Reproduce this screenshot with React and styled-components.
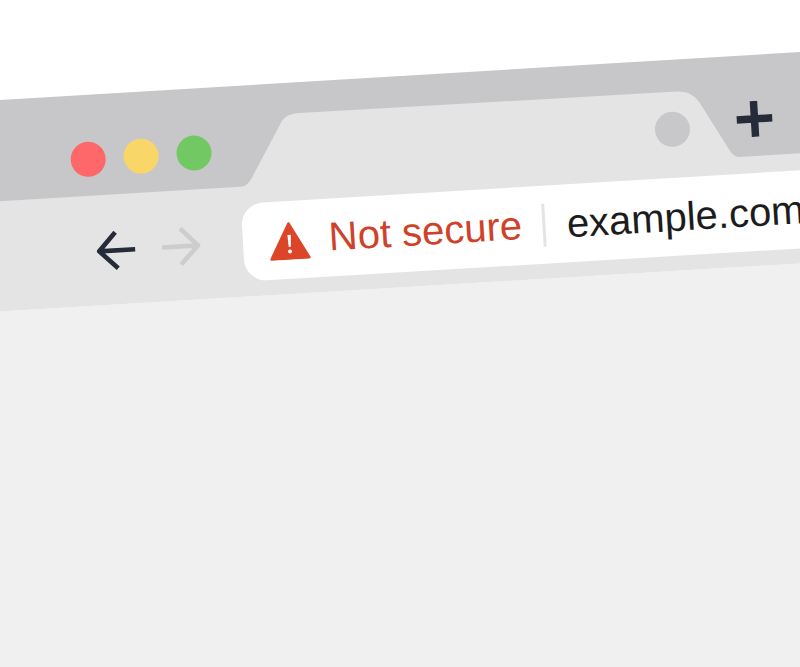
import React from "react";
import styled, { createGlobalStyle } from "styled-components";

const GlobalStyle = createGlobalStyle`
  html, body {
    margin: 0;
    padding: 0;
    background: #fff;
  }
  #root {
    width: 800px;
    height: 667px;
    overflow: hidden;
  }
`;

const Scene = styled.div`
  width: 800px;
  height: 667px;
  padding-top: 100px;
  box-sizing: border-box;
  overflow: hidden;
`;

const BrowserWindow = styled.div`
  width: 1060px;
  margin-left: -60px;
  transform-origin: 60px 0;
  transform: rotate(-3.43deg);
  font-family: "Liberation Sans", Arial, sans-serif;
`;

const TabStrip = styled.div`
  height: 102px;
  background: #c7c7ca;
  display: flex;
  padding-left: 127px;
`;

const Dots = styled.div`
  display: flex;
  gap: 18px;
  padding-top: 47px;
  width: 163px;
`;

const Dot = styled.span`
  width: 35px;
  height: 35px;
  border-radius: 50%;
  background: ${(props) => props.color};
`;

const Tab = styled.div`
  position: relative;
  width: 510px;
  height: 102px;
  display: flex;
  justify-content: flex-end;
  padding: 52px 53px 0 0;
  box-sizing: border-box;
`;

const TabShape = styled.svg`
  position: absolute;
  top: 0;
  left: 0;
`;

const TabClose = styled.span`
  position: relative;
  width: 35px;
  height: 35px;
  border-radius: 50%;
  background: #c8c8ca;
`;

const NewTab = styled.svg`
  margin: 46px 0 0 -6px;
`;

const Toolbar = styled.div`
  position: relative;
  height: 110px;
  margin-top: -1px;
  background: #e4e4e4;
  display: flex;
  padding: 17px 0 0 147px;
  box-sizing: border-box;
`;

const NavButtons = styled.div`
  display: flex;
  flex-shrink: 0;
  gap: 25px;
  padding-top: 19px;
  width: 147px;
`;

const AddressBar = styled.div`
  height: 78px;
  width: 760px;
  background: #fff;
  border-radius: 22px 0 0 22px;
  display: flex;
  align-items: center;
  padding-left: 26px;
  box-sizing: border-box;
`;

const Warning = styled.svg`
  margin: 1px 19px 0 0;
`;

const SecurityLabel = styled.span`
  font-size: 40px;
  color: #cf4229;
  line-height: 1;
  margin-bottom: 2px;
`;

const Divider = styled.span`
  width: 3px;
  height: 43px;
  margin: 0 21px 0 21px;
  background: #e4e4e4;
`;

const Url = styled.span`
  font-size: 40px;
  color: #1c1c20;
  line-height: 1;
`;

const Page = styled.div`
  height: 700px;
  background: #f0f0f0;
`;

const Arrow = ({ flip, color }) => (
  <svg
    width="40"
    height="40"
    viewBox="0 0 40 40"
    style={flip ? { transform: "scaleX(-1)" } : undefined}
  >
    <path
      d="M39 20H3M20 2 3 20l18 18"
      fill="none"
      stroke={color}
      strokeWidth="4.6"
      strokeLinejoin="round"
    />
  </svg>
);

export default function App() {
  return (
    <>
      <GlobalStyle />
      <Scene>
        <BrowserWindow>
          <TabStrip>
            <Dots>
              <Dot color="#fe686a" />
              <Dot color="#f8d668" />
              <Dot color="#72c862" />
            </Dots>
            <Tab>
              <TabShape width="510" height="102" viewBox="0 0 510 102">
                <path
                  d="M0 102C8 102 12 100 16 94L50 38C54 33 60 31 68 31L446 32C456 32 463 36 468 44L496 95C499 100 504 102 510 102Z"
                  fill="#e4e4e4"
                />
              </TabShape>
              <TabClose />
            </Tab>
            <NewTab width="36" height="36" viewBox="0 0 36 36">
              <path d="M0 18H36M18 0V36" fill="none" stroke="#252b38" strokeWidth="7.5" />
            </NewTab>
          </TabStrip>
          <Toolbar>
            <NavButtons>
              <Arrow color="#252b38" />
              <Arrow flip color="#cdcdcf" />
            </NavButtons>
            <AddressBar>
              <Warning width="41" height="38" viewBox="0 0 41 38">
                <path
                  d="M20.5 1.5 39.5 36.5H1.5Z"
                  fill="#dc4528"
                  stroke="#dc4528"
                  strokeWidth="2.5"
                  strokeLinejoin="round"
                />
                <path d="M18.8 13h3.4l-.6 12h-2.2Z" fill="#fff" />
                <circle cx="20.5" cy="29.5" r="2" fill="#fff" />
              </Warning>
              <SecurityLabel>Not secure</SecurityLabel>
              <Divider />
              <Url>example.com</Url>
            </AddressBar>
          </Toolbar>
          <Page />
        </BrowserWindow>
      </Scene>
    </>
  );
}
